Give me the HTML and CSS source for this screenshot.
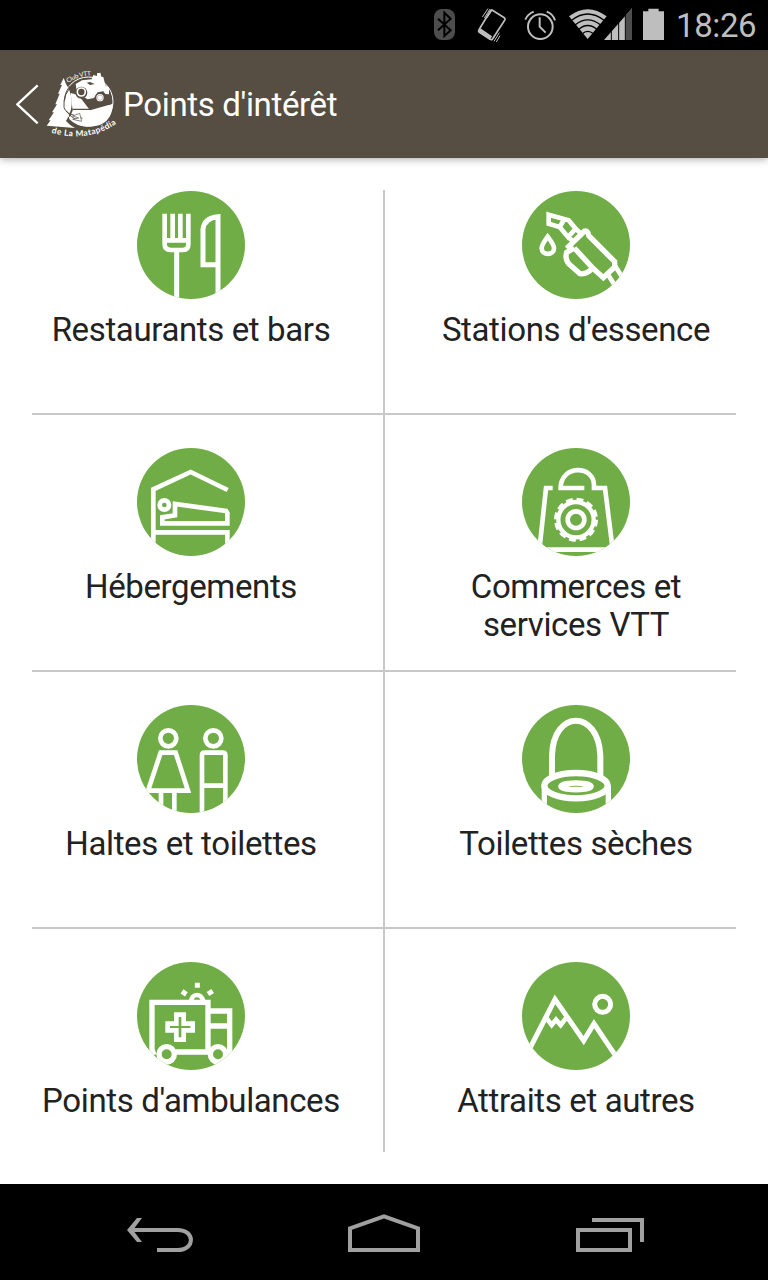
FILE: index.html
```html
<!DOCTYPE html>
<html lang="fr">
<head>
<meta charset="utf-8">
<title>Points d'intérêt</title>
<link rel="stylesheet" href="styles.css">
</head>
<body>
<div class="screen">
  <div class="status">
    <svg class="status-icons" viewBox="0 0 750 150">
      <rect x="42" y="27" width="63" height="93" rx="24" fill="#4d4d4d"/>
      <path d="M54 56L92 91L73 108V38L92 56L54 91" fill="none" stroke="#000" stroke-width="6"/>
      <g fill="none" stroke="#bebebe">
        <path d="M216 30L254 54Q257 57 254 61L218 116Q215 120 210 118L177 96Q174 93 177 89L211 33Q213 29 216 30Z" stroke-width="5"/>
        <path d="M178 90L213 114" stroke-width="12"/>
        <path d="M187 51L204 26M193 54L210 27M200 55L216 31M216 121L234 91M222 124L238 98M229 126L240 107" stroke-width="3"/>
        <circle cx="361" cy="80" r="37" stroke-width="6"/>
        <path d="M359 52V80L377 98" stroke-width="6"/>
        <path d="M316 59Q323 42 341 35M380 35Q399 42 405 61" stroke-width="6"/>
      </g>
      <path d="M447 49Q503 6 560 49L503 117Z" fill="#bebebe"/>
      <path d="M455 61Q503 23 552 61M465 75Q503 44 542 75M475 89Q503 64 532 89M486 102Q503 86 521 102" fill="none" stroke="#000" stroke-width="4"/>
      <path d="M552 120L636 25V120Z" fill="#bebebe"/><path d="M617 46L636 25V120H617Z" fill="#4d4d4d"/>
      <path d="M574 90V121M596 65V121M616 42V121" stroke="#000" stroke-width="3"/>
      <path d="M669 34H685V26H716V34H732V120H669Z" fill="#bebebe"/>
    </svg>
    <span class="clock">18:26</span>
  </div>
  <header class="appbar">
    <svg class="chevron" viewBox="0 0 72 120"><path d="M65 4L4 61L65 118" fill="none" stroke="#fff" stroke-width="7"/></svg>
    <svg class="logo" viewBox="0 0 252 252">
      <defs>
        <path id="arcTop" d="M84 69Q112 48 158 46"/>
        <path id="arcBottom" d="M34 218Q142 250 231 190"/>
      </defs>
      <circle cx="145" cy="125" r="74" fill="none" stroke="#fff" stroke-width="3"/>
      <path d="M71 54L78 72Q92 92 95 121Q98 151 78 183Q91 198 105 204L20 197L32 181H26L42 157H36L51 133H46L59 101H54L66 75H61Z" fill="#fff"/>
      <path d="M92 99L115 105L150 151L219 131Q215 198 151 199Q111 202 87 176L98 152Z" fill="#fff"/>
      <path d="M107 72L126 61L155 58L160 45L171 48V40L181 38L184 50L190 51L196 76L207 83V103L196 102L190 94L173 97L162 114L143 118L132 112L138 96L130 87L110 92Z" fill="#fff"/>
      <path d="M140 68L150 66L164 72L150 75Z" fill="#564e43"/>
      <path d="M89 84Q74 104 73 123M89 79Q70 102 72 142Q79 162 100 165L127 175M79 152Q93 174 116 181" fill="none" stroke="#564e43" stroke-width="3"/>
      <path d="M97 148H151V136L211 132" fill="none" stroke="#564e43" stroke-width="4"/>
      <path d="M119 160L125 184L98 178L116 174L98 168Z" fill="#fff" stroke="#564e43" stroke-width="2"/>
      <circle cx="124" cy="98" r="18" fill="#564e43"/><circle cx="124" cy="96" r="12" fill="none" stroke="#fff" stroke-width="5"/>
      <circle cx="124" cy="96" r="5" fill="#564e43"/>
      <circle cx="180" cy="114" r="16" fill="#564e43"/><circle cx="180" cy="113" r="11" fill="#fff"/><circle cx="180" cy="113" r="8" fill="none" stroke="#564e43" stroke-width="1"/>
      <text class="logo-text small"><textPath href="#arcTop" textLength="74">Club VTT</textPath></text>
      <text class="logo-text"><textPath href="#arcBottom" textLength="204">de La Matapédia</textPath></text>
    </svg>
    <h1 class="title">Points d'intérêt</h1>
  </header>
  <main class="grid">
    <div class="divider"></div>
    <section class="cell row1">
      <svg class="icon" viewBox="21 18 324 324"><g class="line">
        <path d="M104 86V178Q104 195 122 195H159Q175 195 175 178V86M128 86V165M151 86V165M104 166H175"/><path d="M140 195V345M264 345V95Q222 99 219 133V239H264" stroke-width="15"/></g></svg>
      <p class="label">Restaurants et bars</p>
    </section>
    <section class="cell row1">
      <svg class="icon" viewBox="21 18 324 324"><g class="line">
        <path d="M101 89L161 106L182 131L159 156L134 126L101 116ZM134 126L148 103M182 131L202 149M159 156L176 170"/>
        <path d="M155 190L209 138Q219 136 222 153L299 230V246L265 278L233 249M178 189L233 249Q215 269 195 266L161 236Q149 222 155 202L178 189" stroke-width="16"/>
        <path d="M98 155Q80 179 80 190C80 212 117 212 117 190Q117 179 98 155Z"/>
        <path d="M276 264L300 302M300 242L320 274"/></g></svg>
      <p class="label">Stations d'essence</p>
    </section>
    <div class="rule rule1"></div>
    <section class="cell row2">
      <svg class="icon" viewBox="21 18 324 324"><g class="line">
        <path d="M70 345V142L182 90L293 144M70 271H292V345M97 244V226L135 220V186L288 207L292 213V244Z"/><circle cx="103" cy="189" r="14"/></g></svg>
      <p class="label">Hébergements</p>
    </section>
    <section class="cell row2">
      <svg class="icon" viewBox="21 18 324 324"><g class="line">
        <path d="M113 138H93L75 306L84 323H282L291 306L270 138H237V130C237 68 137 68 137 138H208"/>
        <circle cx="183" cy="233" r="53" stroke-width="13"/><circle cx="183" cy="233" r="60" stroke-width="12" stroke-dasharray="20 11.4"/><circle cx="183" cy="233" r="25"/></g></svg>
      <p class="label">Commerces et<br>services VTT</p>
    </section>
    <div class="rule rule2"></div>
    <section class="cell row3">
      <svg class="icon" viewBox="21 18 324 324"><g class="line">
        <circle cx="115" cy="118" r="24"/><circle cx="250" cy="118" r="24"/>
        <path d="M92 161H137L174 275H54ZM93 275V345M133 275V345M216 345V169Q216 161 224 161H278Q286 161 286 169V345M216 260H286"/></g></svg>
      <p class="label">Haltes et toilettes</p>
    </section>
    <section class="cell row3">
      <svg class="icon" viewBox="21 18 324 324"><g class="line">
        <path d="M111 231V170C115 30 250 30 256 170V231" stroke-width="18"/>
        <ellipse cx="183" cy="260" rx="95" ry="38" stroke-width="19"/><ellipse cx="183" cy="262" rx="45" ry="10" stroke-width="17"/>
        <path d="M88 259V345M280 259V345" stroke-width="16"/></g></svg>
      <p class="label">Toilettes sèches</p>
    </section>
    <div class="rule rule3"></div>
    <section class="cell row4">
      <svg class="icon" viewBox="21 18 324 324"><g class="line">
        <path d="M72 297L66 281V139H234V288M137 288H238M234 165H299V288H284M234 210H299" stroke-width="16"/>
        <path d="M139 176H161V203H188V223H161V251H139V223H113V203H139Z"/>
        <path d="M183 138C184 110 216 110 220 138"/><path d="M202 80V95M156 106L169 115M248 105L234 114" stroke-width="15"/>
        <circle cx="110" cy="295" r="23" stroke-width="16"/><circle cx="264" cy="295" r="23" stroke-width="16"/></g></svg>
      <p class="label">Points d'ambulances</p>
    </section>
    <section class="cell row4">
      <svg class="icon" viewBox="21 18 324 324"><g class="line">
        <path d="M38 290L120 130L206 254L237 203L305 304" stroke-width="15"/><path d="M95 187L110 207L123 191L137 207L154 185"/><circle cx="263" cy="145" r="24" stroke-width="15"/></g></svg>
      <p class="label">Attraits et autres</p>
    </section>
  </main>
  <nav class="navbar">
    <svg class="nav-icons" viewBox="0 0 2304 288"><g fill="none" stroke="#a0a0a0" stroke-width="12">
      <path d="M394 138H533C586 138 586 198 533 198H471"/><path d="M426 102H411L381 138L411 174H426L399 138Z" fill="#a0a0a0" stroke="none"/>
      <path d="M1050 198V133L1152 97L1254 133V198Z"/>
      <path d="M1734 138H1890V198H1734ZM1776 108H1926V174"/></g></svg>
  </nav>
</div>
</body>
</html>
```
FILE: styles.css
```css
* { box-sizing: border-box; }
body { margin: 0; font-family: Roboto, "Liberation Sans", sans-serif; background: #fff; }
svg { display: block; flex: none; }
.screen { width: 768px; height: 1280px; display: flex; flex-direction: column; }
.status { height: 50px; background: #000; display: flex; justify-content: flex-end; }
.status-icons { width: 250px; height: 50px; }
.clock { width: 98px; padding-left: 6px; font-size: 33px; line-height: 52px; color: #bebebe; letter-spacing: -0.4px; }
.appbar { height: 108px; background: #564e43; display: flex; align-items: flex-start; box-shadow: 0 1px 8px rgba(0, 0, 0, .35); }
.chevron { width: 24px; height: 40px; margin: 34px 0 0 16px; }
.logo { width: 84px; height: 84px; margin-top: 10px; }
.logo-text { fill: #fff; font-family: Lato, sans-serif; font-size: 25px; font-weight: 700; }
.logo-text.small { font-size: 19px; font-weight: 400; }
.title { margin: 0 0 0 -1px; font-size: 33px; font-weight: 400; line-height: 110px; letter-spacing: -0.35px; color: #fff; white-space: nowrap; }
.grid { height: 1026px; display: grid; grid-template-columns: 383px 2px 383px; grid-template-rows: 255px 2px 255px 2px 255px 2px 255px; }
.divider { grid-column: 2; grid-row: 1 / -1; margin: 32px 0; background: #c8c8c8; }
.rule { grid-column: 1 / -1; margin: 0 32px; background: #c8c8c8; }
.rule1 { grid-row: 2; }
.rule2 { grid-row: 4; }
.rule3 { grid-row: 6; }
.cell { width: 382px; padding-top: 33px; display: flex; flex-direction: column; align-items: center; }
.cell:nth-of-type(odd) { grid-column: 1; }
.cell:nth-of-type(even) { grid-column: 3; }
.row1 { grid-row: 1; }
.row2 { grid-row: 3; }
.row3 { grid-row: 5; }
.row4 { grid-row: 7; }
.icon { width: 108px; height: 108px; border-radius: 50%; background: #70ad47; }
.line { fill: none; stroke: #fff; stroke-width: 14; }
.label { margin: 12px 0 0; font-size: 33px; line-height: 38px; letter-spacing: -0.37px; color: #222; text-align: center; white-space: nowrap; }
.navbar { height: 96px; background: #000; }
.nav-icons { width: 768px; height: 96px; }
```
